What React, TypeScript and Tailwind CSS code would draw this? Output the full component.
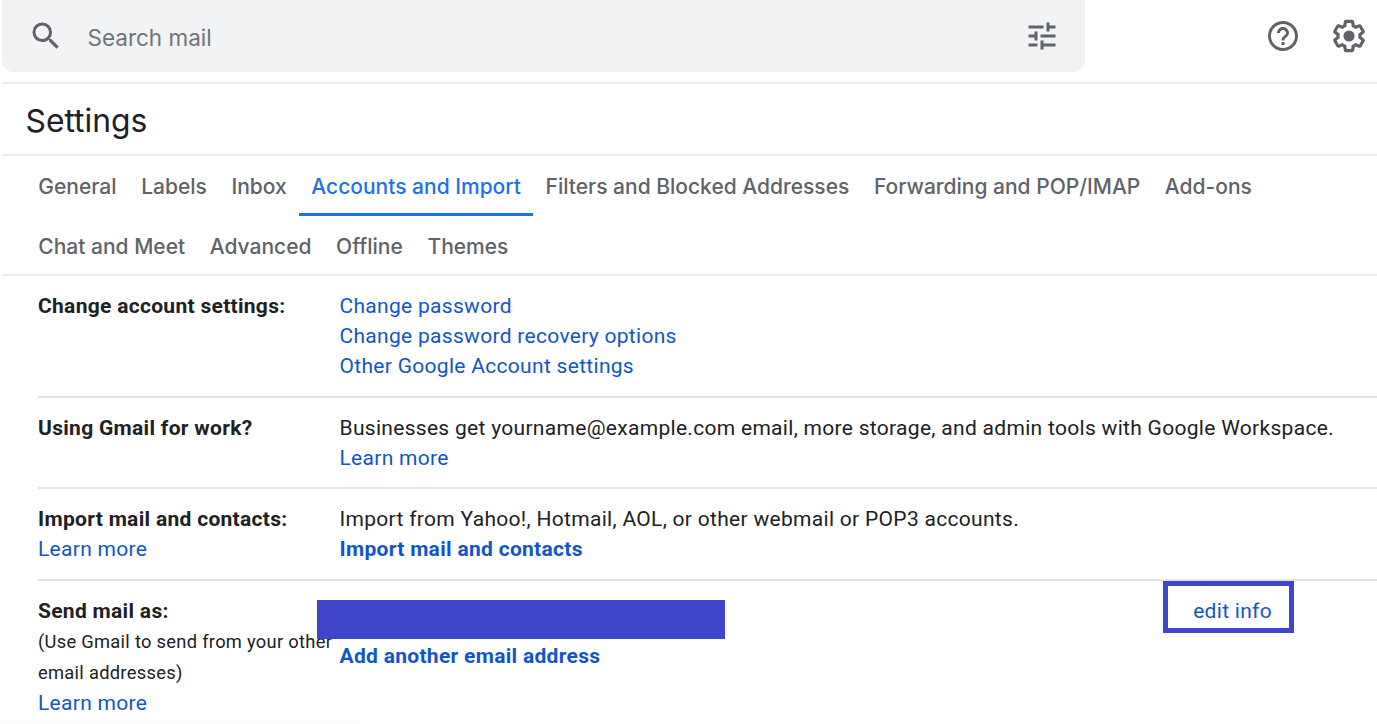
const TABS_ROW_1 = [
  { label: "General" },
  { label: "Labels" },
  { label: "Inbox" },
  { label: "Accounts and Import", active: true },
  { label: "Filters and Blocked Addresses" },
  { label: "Forwarding and POP/IMAP" },
  { label: "Add-ons" },
];
const TABS_ROW_2 = [{ label: "Chat and Meet" }, { label: "Advanced" }, { label: "Offline" }, { label: "Themes" }];

function Tabs({ tabs }: { tabs: { label: string; active?: boolean }[] }) {
  return (
    <div className="flex h-[60px] pl-[24px]">
      {tabs.map((t) => (
        <div
          key={t.label}
          className={`flex h-[60px] items-center px-[12.300px] text-[21px] font-medium ${
            t.active ? "border-b-[3px] border-[#1a73e8] pt-[5px] text-[#1a73e8]" : "pt-[2px] text-[#5f6368]"
          }`}
        >
          {t.label}
        </div>
      ))}
    </div>
  );
}

function SearchIcon() {
  return (
    <svg width="36" height="36" viewBox="0 0 24 24" fill="#5f6368">
      <path d="M15.500 14h-.79l-.28-.27A6.471 6.471 0 0 0 16 9.500 6.500 6.500 0 1 0 9.500 16c1.610 0 3.090-.59 4.230-1.570l.27.28v.79l5 4.990L20.490 19l-4.990-5zm-6 0C7.010 14 5 11.990 5 9.500S7.010 5 9.500 5 14 7.010 14 9.500 11.990 14 9.500 14z" />
    </svg>
  );
}

function SliderIcon() {
  return (
    <svg width="36" height="36" viewBox="0 0 24 24" fill="#5f6368">
      <path d="M3 17v2h6v-2H3zM3 5v2h10V5H3zm10 16v-2h8v-2h-8v-2h-2v6h2zM7 9v2H3v2h4v2h2V9H7zm14 4v-2H11v2h10zm-6-4h2V7h4V5h-4V3h-2v6z" />
    </svg>
  );
}

function HelpIcon() {
  return (
    <svg width="36" height="36" viewBox="0 0 24 24" fill="#5f6368">
      <path d="M11 18h2v-2h-2v2zm1-16C6.480 2 2 6.480 2 12s4.480 10 10 10 10-4.480 10-10S17.520 2 12 2zm0 18c-4.410 0-8-3.590-8-8s3.590-8 8-8 8 3.590 8 8-3.590 8-8 8zm0-14c-2.210 0-4 1.790-4 4h2c0-1.100.9-2 2-2s2 .9 2 2c0 2-3 1.750-3 5h2c0-2.250 3-2.500 3-5 0-2.210-1.790-4-4-4z" />
    </svg>
  );
}

function GearIcon() {
  return (
    <svg width="38" height="38" viewBox="0 0 24 24" fill="#5f6368">
      <path d="M13.850 22.250h-3.700c-.74 0-1.360-.54-1.450-1.270l-.27-1.890c-.27-.14-.53-.29-.79-.46l-1.800.72c-.7.26-1.470-.03-1.810-.65L2.200 15.530c-.35-.66-.2-1.440.36-1.880l1.530-1.190c-.01-.15-.02-.3-.02-.46 0-.15.01-.31.02-.46l-1.520-1.190c-.59-.45-.74-1.260-.37-1.880l1.850-3.190c.34-.62 1.110-.9 1.790-.63l1.810.73c.26-.17.52-.32.78-.46l.27-1.910c.09-.7.71-1.250 1.440-1.250h3.700c.74 0 1.360.54 1.450 1.270l.27 1.890c.27.14.53.29.79.46l1.800-.72c.71-.26 1.480.03 1.820.65l1.840 3.180c.36.66.2 1.440-.36 1.880l-1.520 1.190c.01.15.02.3.02.46s-.01.31-.02.46l1.520 1.190c.56.45.72 1.230.37 1.860l-1.860 3.220c-.34.62-1.110.9-1.800.63l-1.800-.73c-.26.17-.52.32-.78.46l-.27 1.910c-.1.68-.72 1.220-1.460 1.220zm-3.230-2h2.760l.37-2.550.53-.22c.44-.18.88-.44 1.340-.78l.45-.34 2.380.96 1.380-2.400-2.030-1.580.07-.56c.03-.26.06-.51.06-.78s-.03-.53-.06-.78l-.07-.56 2.030-1.580-1.390-2.400-2.390.96-.45-.35c-.42-.32-.87-.58-1.330-.77l-.52-.22-.37-2.550h-2.760l-.37 2.550-.53.21c-.44.19-.88.44-1.340.79l-.45.33-2.380-.95-1.390 2.390 2.030 1.580-.07.56a7 7 0 0 0-.06.79c0 .26.02.53.06.78l.07.56-2.030 1.580 1.380 2.400 2.390-.96.45.35c.43.33.86.58 1.330.77l.53.22.38 2.550z" />
      <circle cx="12" cy="12" r="3.500" />
    </svg>
  );
}

const linkClass = "text-[#1155cc]";

function Row({ label, children, last }: { label: React.ReactNode; children: React.ReactNode; last?: boolean }) {
  return (
    <div className={`ml-[38px] flex pt-[15px] ${last ? "" : "border-b-2 border-[#e4e4e4] pb-[14.500px]"}`}>
      <div className="w-[301.500px] shrink-0">{label}</div>
      <div className="flex-1">{children}</div>
    </div>
  );
}

export default function App() {
  return (
    <div className="relative h-[724px] w-[1377px] overflow-hidden bg-white text-[21px] leading-[30px] tracking-[0.3px] text-[#202124] [font-family:Roboto,sans-serif]">
      {/* Top bar */}
      <div className="ml-[2px] flex h-[84px] border-b-2 border-[#ececec]">
        <div className="flex h-[72px] w-[1083px] items-center rounded-b-[12px] bg-[#f1f3f4] pl-[25.500px] pr-[25px]">
          <SearchIcon />
          <span className="ml-[24px] flex-1 pt-[4px] text-[22.500px] tracking-normal text-[#70757a] [font-family:Inter,sans-serif]">
            Search mail
          </span>
          <SliderIcon />
        </div>
        <div className="ml-[180px] flex h-[72px] items-center gap-[29px]">
          <HelpIcon />
          <GearIcon />
        </div>
      </div>

      {/* Title */}
      <div className="ml-[2px] flex h-[72px] items-center border-b-2 border-[#ececec] pl-[23.500px] pt-[3px] text-[31.800px] tracking-normal [font-family:Inter,sans-serif]">
        Settings
      </div>

      {/* Tabs */}
      <div className="ml-[2px] h-[120px] border-b-2 border-[#ececec] tracking-normal [font-family:Inter,sans-serif]">
        <Tabs tabs={TABS_ROW_1} />
        <Tabs tabs={TABS_ROW_2} />
      </div>

      <Row label={<b className="font-bold">Change account settings:</b>}>
        <div className={linkClass}>Change password</div>
        <div className={linkClass}>Change password recovery options</div>
        <div className={linkClass}>Other Google Account settings</div>
      </Row>
      <Row label={<b className="font-bold">Using Gmail for work?</b>}>
        <div>Businesses get yourname@example.com email, more storage, and admin tools with Google Workspace.</div>
        <div className={linkClass}>Learn more</div>
      </Row>
      <Row
        label={
          <>
            <b className="block font-bold">Import mail and contacts:</b>
            <div className={linkClass}>Learn more</div>
          </>
        }
      >
        <div>Import from Yahoo!, Hotmail, AOL, or other webmail or POP3 accounts.</div>
        <div className={`font-bold ${linkClass}`}>Import mail and contacts</div>
      </Row>
      <Row
        last
        label={
          <>
            <b className="block font-bold">Send mail as:</b>
            <div className="text-[18.300px] leading-[31px]">(Use Gmail to send from your other</div>
            <div className="text-[18.300px] leading-[31px]">email addresses)</div>
            <div className={linkClass}>Learn more</div>
          </>
        }
      >
        <div className={`mt-[45px] font-bold ${linkClass}`}>Add another email address</div>
      </Row>

      {/* Redaction marks drawn over the page */}
      <div className="absolute left-[317px] top-[600px] h-[39px] w-[408px] bg-[#4046cc]" />
      <div className="absolute left-[1163px] top-[581px] flex h-[52px] w-[131px] items-center justify-end border-[5px] border-[#4046cc] pr-[17px] pt-[8px] text-[#1155cc]">
        edit info
      </div>
      <div className="absolute bottom-0 left-0 h-[3px] w-[360px] bg-[#fafafa]" />
    </div>
  );
}
